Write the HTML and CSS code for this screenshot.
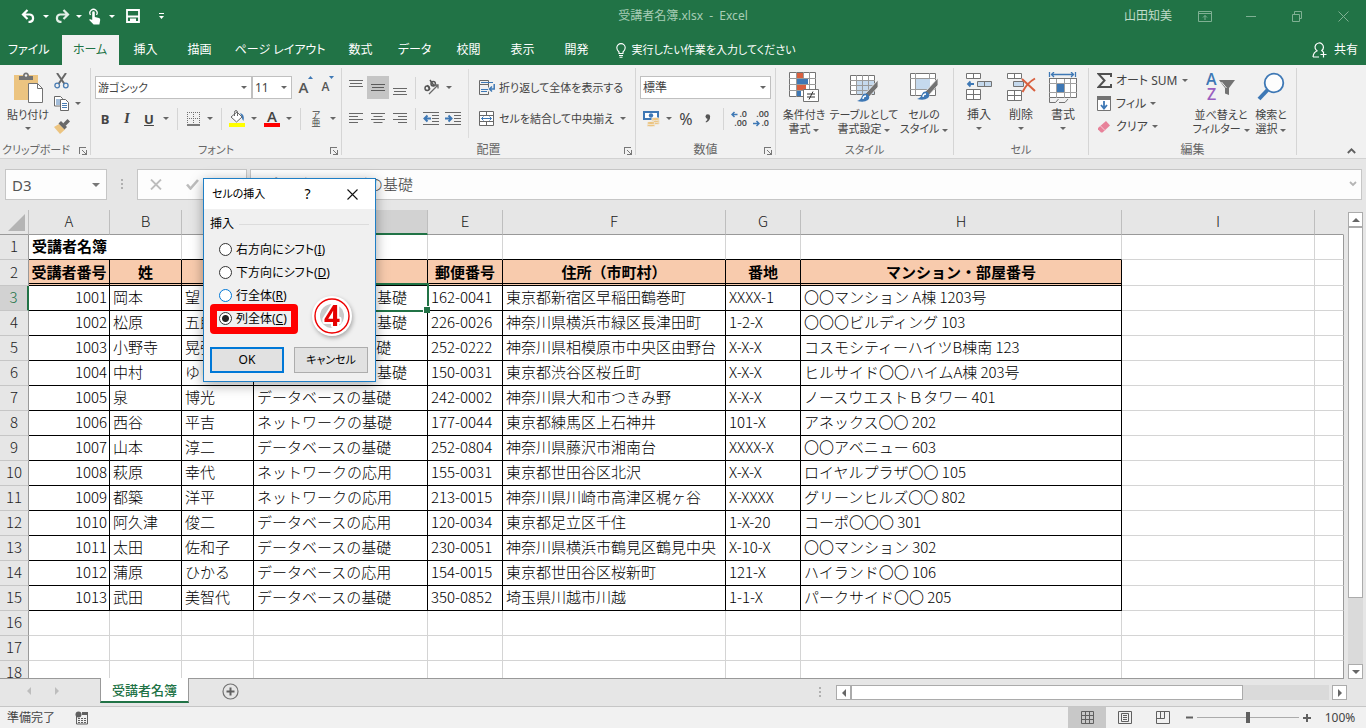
FILE: index.html
```html
<!DOCTYPE html>
<html lang="ja">
<head>
<meta charset="utf-8">
<title>受講者名簿.xlsx - Excel</title>
<link rel="stylesheet" href="styles.css">
</head>
<body>
<header class="titlebar">
  <div class="quick">
    <button class="qbtn" aria-label="元に戻す"><svg width="16" height="14" viewBox="0 0 16 14"><path d="M2.500 5.500H9a3.700 3.700 0 0 1 0 7.300H7.500M6.500 1 2 5.500 6.500 10" fill="none" stroke="#fff" stroke-width="2.200"/></svg></button>
    <button class="qdd" aria-label="元に戻すの一覧"><i class="tri"></i></button>
    <button class="qbtn redo" aria-label="やり直し"><svg width="16" height="14" viewBox="0 0 16 14"><path d="M13.500 5.500H6a3.700 3.700 0 0 0 0 7.300H7.500M9.500 1 14 5.500 9.500 10" fill="none" stroke="#e3efe8" stroke-width="2.200"/></svg></button>
    <button class="qdd" aria-label="やり直しの一覧"><i class="tri"></i></button>
    <button class="qbtn" aria-label="タッチ/マウス モードの切り替え"><svg width="14" height="17" viewBox="0 0 14 17"><path d="M2.500 7a3.600 3.600 0 1 1 6 0" fill="none" stroke="#fff" stroke-width="1.300"/><path d="M4.200 4.500a1.300 1.300 0 0 1 2.600 0V9l4.200 1q1.500.500 1.200 2l-.8 4.500H5.600L1 11.800q1-1.400 3.200.2z" fill="#fff"/></svg></button>
    <button class="qdd" aria-label="モードの一覧"><i class="tri"></i></button>
    <button class="qbtn save" aria-label="上書き保存"><svg width="14" height="14" viewBox="0 0 14 14"><path d="M1 1h12v12H1zM1 7.500h12" fill="none" stroke="#fff" stroke-width="1.800"/><path d="M4 9.500h6V14H8v-2H6.500v2H4z" fill="#fff"/></svg></button>
    <button class="qbtn" aria-label="クイック アクセス ツール バーのユーザー設定"><svg width="7" height="7" viewBox="0 0 7 7"><path d="M1 .5h5" stroke="#fff"/><path d="M1 3h5L3.500 6z" fill="#fff"/></svg></button>
  </div>
  <div class="doctitle">受講者名簿.xlsx&nbsp; - &nbsp;Excel</div>
  <div class="winctl">
    <span class="user">山田知美</span>
    <button aria-label="リボンの表示オプション"><svg width="14" height="11" viewBox="0 0 14 11"><path d="M.5.5h13v10H.5zM.5 2.500h13M7 9V4.500M5 6.500l2-2 2 2" fill="none" stroke="#7fb093"/></svg></button>
    <button aria-label="最小化"><svg width="10" height="11" viewBox="0 0 10 11"><path d="M0 5.500h10" stroke="#7fb093"/></svg></button>
    <button aria-label="元に戻す(縮小)"><svg width="10" height="11" viewBox="0 0 10 11"><path d="M.5 3.500h7v7h-7zM2.500 3V.5h7v7H8" fill="none" stroke="#7fb093"/></svg></button>
    <button aria-label="閉じる"><svg width="11" height="11" viewBox="0 0 11 11"><path d="M.5.5l10 10M10.500.5l-10 10" stroke="#7fb093"/></svg></button>
  </div>
</header>
<nav class="tabs">
  <button class="tab first">ファイル</button>
  <button class="tab active">ホーム</button>
  <button class="tab">挿入</button>
  <button class="tab">描画</button>
  <button class="tab">ページ レイアウト</button>
  <button class="tab">数式</button>
  <button class="tab">データ</button>
  <button class="tab">校閲</button>
  <button class="tab">表示</button>
  <button class="tab">開発</button>
  <button class="tellme"><svg width="10" height="15" viewBox="0 0 10 15"><path d="M3 10.500V9Q.8 7 .8 4.800a4.200 4.200 0 0 1 8.400 0Q9.200 7 7 9v1.500zM3 12.500h4M3.500 14.200h3" fill="none" stroke="#fff" stroke-width="1.100"/></svg>実行したい作業を入力してください</button>
  <button class="share"><svg width="16" height="16" viewBox="0 0 16 16"><path d="M1 15q.5-5 4.500-6.200M5.500 9A4.200 4.200 0 1 1 9.800 8.500L11 10M1 15h6M11.500 9.500v6M8.500 12.500h6" fill="none" stroke="#fff" stroke-width="1.200"/></svg>共有</button>
</nav>

<section class="ribbon">
  <div class="group g-clip">
    <div class="gbody">
      <button class="big paste">
        <svg width="29" height="31" viewBox="0 0 29 31"><path d="M0 3h24v25H0z" fill="#ecc480"/><path d="M5 8V4h4q0-3.500 3-3.500T15 4h4v4z" fill="#737373"/><circle cx="12" cy="3.500" r="1.200" fill="#f1f1f1"/><path d="M14.500 11.500h9l5 5v14h-14z" fill="#fff" stroke="#737373"/><path d="M23.500 11.500v5h5" fill="none" stroke="#737373"/></svg>
        <span>貼り付け</span><i class="tri"></i>
      </button>
      <div class="clipcol">
        <button aria-label="切り取り"><svg width="15" height="16" viewBox="0 0 15 16"><path d="M3 0l7.500 11M12 0 4.500 11" stroke="#686868" stroke-width="2" fill="none"/><circle cx="3.200" cy="12.500" r="2.300" fill="none" stroke="#4a7db3" stroke-width="1.300"/><circle cx="11.800" cy="12.500" r="2.300" fill="none" stroke="#4a7db3" stroke-width="1.300"/></svg></button>
        <button aria-label="コピー"><svg width="16" height="15" viewBox="0 0 16 15"><path d="M.5.5h6l2 2V10h-8z" fill="#fff" stroke="#686868"/><path d="M2 4h4M2 6h4M2 8h4" stroke="#4a7db3"/><path d="M6.500 3.500h5l3 3v8h-8z" fill="#fff" stroke="#686868"/><path d="M8 7.500h5M8 9.500h5M8 11.500h5" stroke="#4a7db3"/></svg><i class="tri"></i></button>
        <button aria-label="書式のコピー/貼り付け"><svg width="17" height="15" viewBox="0 0 17 15"><path d="M0 8l5-3 6 5.500L6 15z" fill="#ecc480"/><path d="M4.500 4.500 7 2l6 6-2.500 2.500z" fill="#686868"/><path d="M9 4.500 13.500 0 16 2.500 11.500 7z" fill="#686868"/></svg></button>
      </div>
    </div>
    <div class="glabel"><span>クリップボード</span><i class="launch"></i></div>
  </div>

  <div class="group g-font">
    <div class="gbody stack">
      <div class="row">
        <span class="combo w157"><select class="small" aria-label="フォント"><option>游ゴシック</option></select></span>
        <span class="combo w40"><select aria-label="フォント サイズ"><option>11</option></select></span>
        <button class="ib glyph grow" aria-label="フォント サイズの拡大">A<svg width="5" height="3" viewBox="0 0 5 3"><path d="M0 3h5L2.500 0z" fill="#3e78b5"/></svg></button>
        <button class="ib glyph shrink" aria-label="フォント サイズの縮小">A<svg width="5" height="3" viewBox="0 0 5 3"><path d="M0 0h5L2.500 3z" fill="#3e78b5"/></svg></button>
      </div>
      <div class="row gap">
        <button class="b20 bold">B</button>
        <button class="b20 ital">I</button>
        <span class="pair"><button class="b20 under">U</button><button class="dd" aria-label="下線の種類"><i class="tri"></i></button></span>
        <i class="sep"></i>
        <span class="pair"><button class="b20" aria-label="罫線"><svg width="13" height="14" viewBox="0 0 13 14"><path d="M.5 0v12M6.500 0v12M12.500 0v12M0 .5h13M0 6.500h13" stroke="#707070" stroke-dasharray="1 1" fill="none"/><path d="M0 13h13" stroke="#505050" stroke-width="1.500"/></svg></button><button class="dd" aria-label="罫線の種類"><i class="tri"></i></button></span>
        <i class="sep"></i>
        <span class="pair"><button class="b20" aria-label="塗りつぶしの色"><svg width="16" height="17" viewBox="0 0 16 17"><path d="M2 7l6-5 5 5-5.500 5z" fill="#fff" stroke="#686868"/><path d="M5.500 6V2.500q0-2 1.500-2t1.500 2V6" fill="none" stroke="#686868"/><path d="M11 3q5 1 3.500 8Q12.500 9 13 7z" fill="#3e78b5"/><path d="M0 13h16v4H0z" fill="#ff0"/></svg></button><button class="dd" aria-label="塗りつぶしの色の一覧"><i class="tri"></i></button></span>
        <span class="pair"><button class="b20 fcolor">A</button><button class="dd" aria-label="フォントの色の一覧"><i class="tri"></i></button></span>
        <i class="sep"></i>
        <span class="pair"><button class="b20 ruby"><span>ア</span><span>亜</span></button><button class="dd" aria-label="ふりがなの設定"><i class="tri"></i></button></span>
      </div>
    </div>
    <div class="glabel"><span>フォント</span><i class="launch"></i></div>
  </div>

  <div class="group g-align">
    <div class="gbody">
      <div class="alignL stack">
        <div class="row">
          <button class="ib" aria-label="上揃え"><svg width="14" height="15" viewBox="0 0 14 15"><path d="M0 .5h14M1 3.500h12M0 6.500h14" stroke="#686868"/></svg></button>
          <button class="ib on" aria-label="上下中央揃え"><svg width="14" height="15" viewBox="0 0 14 15"><path d="M0 4.500h14M1 7.500h12M0 10.500h14" stroke="#5a5a5a"/></svg></button>
          <button class="ib" aria-label="下揃え"><svg width="14" height="15" viewBox="0 0 14 15"><path d="M0 8.500h14M1 11.500h12M0 14.500h14" stroke="#686868"/></svg></button>
          <i class="sep"></i>
          <span class="pair"><button class="ib" aria-label="方向"><svg width="17" height="17" viewBox="0 0 17 17"><g fill="none" stroke="#555" stroke-width="1.500"><circle cx="4.200" cy="9.300" r="2.200"/><path d="M4.300 6.200 7 10.500M7 1l4.200 6"/><circle cx="10.200" cy="4.800" r="2.200"/></g><path d="M6 15 15 6M11.500 6H15v3.500" fill="none" stroke="#686868" stroke-width="1.300"/></svg></button><button class="dd" aria-label="方向の一覧"><i class="tri"></i></button></span>
        </div>
        <div class="row">
          <button class="ib" aria-label="左揃え"><svg width="14" height="11" viewBox="0 0 14 11"><path d="M0 .5h14M0 3.500h9M0 6.500h14M0 9.500h9" stroke="#686868"/></svg></button>
          <button class="ib" aria-label="中央揃え"><svg width="14" height="11" viewBox="0 0 14 11"><path d="M0 .5h14M2.500 3.500h9M0 6.500h14M2.500 9.500h9" stroke="#686868"/></svg></button>
          <button class="ib" aria-label="右揃え"><svg width="14" height="11" viewBox="0 0 14 11"><path d="M0 .5h14M5 3.500h9M0 6.500h14M5 9.500h9" stroke="#686868"/></svg></button>
          <i class="sep"></i>
          <button class="ib" aria-label="インデントを減らす"><svg width="16" height="14" viewBox="0 0 16 14"><path d="M0 .5h16M9 3.500h7M9 6.500h7M9 9.500h7M0 12.500h16" stroke="#686868"/><path d="M8 6.500H2M4.500 3.500l-3 3 3 3" fill="none" stroke="#3e78b5" stroke-width="2"/></svg></button>
          <button class="ib" aria-label="インデントを増やす"><svg width="16" height="14" viewBox="0 0 16 14"><path d="M0 .5h16M9 3.500h7M9 6.500h7M9 9.500h7M0 12.500h16" stroke="#686868"/><path d="M0 6.500h6M3.500 3.500l3 3-3 3" fill="none" stroke="#3e78b5" stroke-width="2"/></svg></button>
        </div>
      </div>
      <div class="alignR stack">
        <button class="row txt"><svg width="16" height="16" viewBox="0 0 16 16"><path d="M.5.5h9v4h-9zM.5 4.500h9v3M.5 4.500v10h9v-3" fill="none" stroke="#686868"/><path d="M2 2.500h12M2 9.500h7M2 11.500h6" stroke="#3e78b5" stroke-width="1.200"/><path d="M15.200 4v5H11M13 6.500 10.500 9 13 11.500" fill="none" stroke="#3e78b5" stroke-width="1.500"/></svg>折り返して全体を表示する</button>
        <button class="row txt"><svg width="16" height="16" viewBox="0 0 16 16"><path d="M.5.5h14v14H.5zM.5 4.500h14M.5 10.500h14M7.500.5v4M7.500 10.500v4" fill="#fff" stroke="#686868"/><path d="M2.500 7.500h10M4.500 5.500l-2 2 2 2M10.500 5.500l2 2-2 2" fill="none" stroke="#3e78b5"/></svg>セルを結合して中央揃え<i class="tri push"></i></button>
      </div>
    </div>
    <div class="glabel"><span>配置</span><i class="launch"></i></div>
  </div>

  <div class="group g-num">
    <div class="gbody stack">
      <div class="row"><span class="combo w131"><select aria-label="表示形式"><option>標準</option></select></span></div>
      <div class="row">
        <span class="pair"><button class="ib" aria-label="通貨表示形式"><svg width="17" height="16" viewBox="0 0 17 16"><path d="M0 0h16v9H0z" fill="#3e78b5"/><path d="M2 2h12v5H2z" fill="#fff"/><circle cx="8" cy="4.500" r="2.200" fill="#3e78b5"/><g fill="#ecc480" stroke="#f1f1f1" stroke-width=".7"><ellipse cx="12.500" cy="12" rx="4" ry="1.600"/><ellipse cx="12.500" cy="10" rx="4" ry="1.600"/><ellipse cx="12.500" cy="8" rx="4" ry="1.600"/><ellipse cx="8" cy="14.200" rx="4" ry="1.600"/><ellipse cx="8" cy="12" rx="4" ry="1.600"/></g></svg></button><button class="dd" aria-label="通貨の一覧"><i class="tri"></i></button></span>
        <button class="ib pct">%</button>
        <button class="ib" aria-label="桁区切りスタイル"><svg width="6" height="9" viewBox="0 0 6 9"><circle cx="2.800" cy="2.500" r="2.300" fill="#555"/><path d="M5 2.500q.5 4-4 6l-.4-.8Q3 6 2.500 3.500z" fill="#555"/></svg></button>
        <i class="sep near"></i>
        <button class="ib dec" aria-label="小数点以下の表示桁数を増やす"><span><svg width="7" height="7" viewBox="0 0 7 7"><path d="M6.500 3.500H1M3.500 1 1 3.500 3.500 6" fill="none" stroke="#3e78b5" stroke-width="1.500"/></svg>.0</span><span>.00</span></button>
        <button class="ib dec" aria-label="小数点以下の表示桁数を減らす"><span>.00</span><span><svg width="7" height="7" viewBox="0 0 7 7"><path d="M0 3.500h5.500M3.500 1 6 3.500 3.500 6" fill="none" stroke="#3e78b5" stroke-width="1.500"/></svg>.0</span></button>
      </div>
    </div>
    <div class="glabel"><span>数値</span><i class="launch"></i></div>
  </div>

  <div class="group g-style">
    <div class="gbody">
      <button class="big w56"><svg width="30" height="31" viewBox="0 0 30 31"><path d="M.5.5h26v24H.5z" fill="#fff" stroke="#737373"/><path d="M0 6.500h27M0 12.500h27M0 18.500h27M7.500 0v25M14.500 0v25M20.500 0v25" stroke="#9a9a9a"/><path d="M8 1h6v5H8zM8 13h9v5H8z" fill="#d9603f"/><path d="M8 7h11v5H8zM8 19h4v5H8z" fill="#3e78b5"/><path d="M14.500 17.500h15v12h-15z" fill="#fff" stroke="#737373"/><path d="M18 22h8M18 25h8M24 19.500 20 27.500" stroke="#333" fill="none"/></svg><span>条件付き</span><span>書式 <i class="tri"></i></span></button>
      <button class="big w64"><svg width="30" height="31" viewBox="0 0 30 31"><path d="M1.500 3.500h24v19h-24z" fill="#fff" stroke="#737373"/><path d="M8 9h17v13H8z" fill="#c5d9ed"/><path d="M1 8.500h25M1 13.500h25M1 18.500h25M7.500 3v20M13.500 3v20M19.500 3v20" stroke="#9a9a9a"/><path d="M29 8v7l-9 10-4-3z" fill="#737373" stroke="#f1f1f1" stroke-width=".8"/><path d="M8 29q4-1 5-5 2-4 6-1.500 2.500 3 0 5.500-4 3-11 1z" fill="#3e78b5"/><path d="M14 27q0-3 3-3" stroke="#fff" stroke-width="1.300" fill="none"/></svg><span>テーブルとして</span><span>書式設定 <i class="tri"></i></span></button>
      <button class="big w56"><svg width="30" height="31" viewBox="0 0 30 31"><path d="M1.500 1.500h25v22h-25z" fill="#fff" stroke="#737373"/><path d="M1 6.500h26M1 17.500h26M6.500 1v23M20.500 1v23" stroke="#9a9a9a"/><path d="M7 7h14v10H7z" fill="#c5d9ed"/><path d="M29 6v7l-9 10-4-3z" fill="#737373" stroke="#f1f1f1" stroke-width=".8"/><path d="M8 27q4-1 5-5 2-4 6-1.500 2.500 3 0 5.500-4 3-11 1z" fill="#3e78b5"/><path d="M14 25q0-3 3-3" stroke="#fff" stroke-width="1.300" fill="none"/></svg><span>セルの</span><span>スタイル <i class="tri"></i></span></button>
    </div>
    <div class="glabel"><span>スタイル</span></div>
  </div>

  <div class="group g-cell">
    <div class="gbody">
      <button class="big w42"><svg width="28" height="31" viewBox="0 0 28 31"><path d="M1.500 1.500h14v5h-14zM8.500 1.500v5M1.500 17.500h14v10h-14zM8.500 17.500v10M1.500 22.500h14" fill="#fff" stroke="#737373"/><path d="M12.500 9.500h14v5h-14zM19.500 9.500v5" fill="#c5d9ed" stroke="#737373"/><path d="M9 12H3M5.500 9.500 3 12l2.500 2.500" fill="none" stroke="#3e78b5" stroke-width="1.800"/></svg><span>挿入</span><i class="tri"></i></button>
      <button class="big w42"><svg width="30" height="31" viewBox="0 0 30 31"><path d="M1.500 1.500h14v5h-14zM8.500 1.500v5M1.500 18.500h14v10h-14zM8.500 18.500v10M1.500 23.500h14" fill="#fff" stroke="#737373"/><path d="M7.500 9.500h10v5h-10z" fill="#c5d9ed" stroke="#737373"/><path d="M16 7l13 12M29 6.500Q21 11 16.500 20" fill="none" stroke="#d9603f" stroke-width="2"/></svg><span>削除</span><i class="tri"></i></button>
      <button class="big w42"><svg width="30" height="31" viewBox="0 0 30 31"><path d="M1.500 0v5M27.500 0v5M3 2.500h23M6 0 3.500 2.500 6 5M23 0l2.500 2.500L23 5" fill="none" stroke="#3e78b5" stroke-width="1.300"/><path d="M1.500 6.500h27v19h-27z" fill="#fff" stroke="#737373"/><path d="M1 11.500h28M1 20.500h28M8.500 6v20M16.500 6v20M22.500 6v20" stroke="#a0a0a0"/><path d="M9 12h7v8H9z" fill="#3e78b5"/><path d="M1 6.500h28" stroke="#737373"/><path d="M1.500 26v4.500h6l3-3.500M11 30.500h6l3-3.500" fill="none" stroke="#737373"/></svg><span>書式</span><i class="tri"></i></button>
    </div>
    <div class="glabel"><span>セル</span></div>
  </div>

  <div class="group g-edit">
    <div class="gbody">
      <div class="editcol">
        <button><svg width="15" height="15" viewBox="0 0 15 15"><path d="M14 4V1H1.500l6 6.500-6 6.500H14v-3" fill="none" stroke="#505050" stroke-width="2"/></svg>オート SUM<i class="tri push"></i></button>
        <button><svg width="15" height="16" viewBox="0 0 15 16"><path d="M.5.5h13v14H.5z" fill="#fff" stroke="#737373"/><path d="M0 0h14v4H0z" fill="#737373"/><path d="M7 5v7M4 9l3 3.500L10 9" fill="none" stroke="#3e78b5" stroke-width="1.800"/></svg>フィル<i class="tri"></i></button>
        <button><svg width="15" height="14" viewBox="0 0 15 14"><path d="M9 1 13 5.500 5.500 12.500H4L1 9.500V8z" fill="#e8829a"/><path d="M3.500 6 8 10.500" stroke="#f6ccd6"/></svg>クリア<i class="tri"></i></button>
      </div>
      <button class="big w54"><svg width="30" height="31" viewBox="0 0 30 31"><text x="0" y="13" font-size="16" font-family="Open Sans" font-weight="600" fill="#3e78b5">A</text><text x="1" y="28" font-size="16" font-family="Open Sans" font-weight="600" fill="#9a5fc0">Z</text><path d="M13 8h16l-6 8v7l-4-1.500V16z" fill="#737373"/><path d="M15.500 10 20.500 16" stroke="#f1f1f1"/></svg><span>並べ替えと</span><span>フィルター <i class="tri"></i></span></button>
      <button class="big w46"><svg width="28" height="31" viewBox="0 0 28 31"><circle cx="17" cy="11" r="9.300" fill="#fdfdfd" stroke="#3e78b5" stroke-width="1.800"/><path d="M10.500 18 2 27" stroke="#3e78b5" stroke-width="4"/></svg><span>検索と</span><span>選択 <i class="tri"></i></span></button>
    </div>
    <div class="glabel"><span>編集</span></div>
  </div>
  <button class="collapse" aria-label="リボンを折りたたむ"><svg width="9" height="6" viewBox="0 0 9 6"><path d="M.8 5 4.500 1.300 8.200 5" fill="none" stroke="#606060" stroke-width="1.800"/></svg></button>
</section>

<section class="fbar">
  <div class="namebox"><input aria-label="名前ボックス" value="D3"><i class="tri"></i></div>
  <i class="dots"></i>
  <div class="fbtns">
    <button aria-label="キャンセル"><svg width="12" height="11" viewBox="0 0 12 11"><path d="M1 .5l10 10M11 .5 1 10.500" stroke="#bdbdbd" stroke-width="1.800"/></svg></button>
    <button aria-label="入力"><svg width="13" height="11" viewBox="0 0 13 11"><path d="M1 5.500 4.500 9.500 12 1" fill="none" stroke="#bdbdbd" stroke-width="2.600"/></svg></button>
    <button class="fx" aria-label="関数の挿入">fx</button>
  </div>
  <div class="finput"><input aria-label="数式バー" value="プログラミングの基礎"><svg width="8" height="6" viewBox="0 0 8 6"><path d="M1 1l3 3 3-3" fill="none" stroke="#b5b5b5" stroke-width="1.800"/></svg></div>
</section>

<main class="sheet">
  <div class="gridwrap">
  <table class="grid">
    <colgroup><col class="c0"><col class="cA"><col class="cB"><col class="cB"><col class="cD"><col class="cE"><col class="cF"><col class="cE"><col class="cH"><col class="cI"><col></colgroup>
    <thead><tr><th class="corner"><svg width="17" height="17" viewBox="0 0 17 17"><path d="M17 0v17H0z" fill="#b4b4b4"/></svg></th><th>A</th><th>B</th><th>C</th><th class="sel">D</th><th>E</th><th>F</th><th>G</th><th>H</th><th>I</th><th></th></tr></thead>
    <tbody>
    <tr class="r1"><th>1</th><td class="ttl" colspan="2">受講者名簿</td><td></td><td></td><td></td><td></td><td></td><td></td><td></td><td></td></tr>
    <tr class="hd"><th>2</th><td>受講者番号</td><td>姓</td><td>名</td><td>受講講座</td><td>郵便番号</td><td>住所（市町村）</td><td>番地</td><td>マンション・部屋番号</td><td></td><td></td></tr>
    <tr class="d"><th class="sel">3</th><td>1001</td><td>岡本</td><td>望</td><td class="cur">プログラミングの基礎<i class="cursor"></i></td><td>162-0041</td><td>東京都新宿区早稲田鶴巻町</td><td>XXXX-1</td><td>〇〇マンション A棟 1203号</td><td></td><td></td></tr>
    <tr class="d"><th>4</th><td>1002</td><td>松原</td><td>五郎</td><td>プログラミングの基礎</td><td>226-0026</td><td>神奈川県横浜市緑区長津田町</td><td>1-2-X</td><td>〇〇〇ビルディング 103</td><td></td><td></td></tr>
    <tr class="d"><th>5</th><td>1003</td><td>小野寺</td><td>晃弘</td><td>データベースの基礎</td><td>252-0222</td><td>神奈川県相模原市中央区由野台</td><td>X-X-X</td><td>コスモシティーハイツB棟南 123</td><td></td><td></td></tr>
    <tr class="d"><th>6</th><td>1004</td><td>中村</td><td>ゆり</td><td>プログラミングの基礎</td><td>150-0031</td><td>東京都渋谷区桜丘町</td><td>X-X-X</td><td>ヒルサイド〇〇ハイムA棟 203号</td><td></td><td></td></tr>
    <tr class="d"><th>7</th><td>1005</td><td>泉</td><td>博光</td><td>データベースの基礎</td><td>242-0002</td><td>神奈川県大和市つきみ野</td><td>X-X-X</td><td>ノースウエストＢタワー 401</td><td></td><td></td></tr>
    <tr class="d"><th>8</th><td>1006</td><td>西谷</td><td>平吉</td><td>ネットワークの基礎</td><td>177-0044</td><td>東京都練馬区上石神井</td><td>101-X</td><td>アネックス〇〇 202</td><td></td><td></td></tr>
    <tr class="d"><th>9</th><td>1007</td><td>山本</td><td>淳二</td><td>データベースの基礎</td><td>252-0804</td><td>神奈川県藤沢市湘南台</td><td>XXXX-X</td><td>〇〇アベニュー 603</td><td></td><td></td></tr>
    <tr class="d"><th>10</th><td>1008</td><td>萩原</td><td>幸代</td><td>ネットワークの応用</td><td>155-0031</td><td>東京都世田谷区北沢</td><td>X-X-X</td><td>ロイヤルプラザ〇〇 105</td><td></td><td></td></tr>
    <tr class="d"><th>11</th><td>1009</td><td>都築</td><td>洋平</td><td>ネットワークの応用</td><td>213-0015</td><td>神奈川県川崎市高津区梶ヶ谷</td><td>X-XXXX</td><td>グリーンヒルズ〇〇 802</td><td></td><td></td></tr>
    <tr class="d"><th>12</th><td>1010</td><td>阿久津</td><td>俊二</td><td>データベースの応用</td><td>120-0034</td><td>東京都足立区千住</td><td>1-X-20</td><td>コーポ〇〇〇 301</td><td></td><td></td></tr>
    <tr class="d"><th>13</th><td>1011</td><td>太田</td><td>佐和子</td><td>データベースの基礎</td><td>230-0051</td><td>神奈川県横浜市鶴見区鶴見中央</td><td>X-10-X</td><td>〇〇マンション 302</td><td></td><td></td></tr>
    <tr class="d"><th>14</th><td>1012</td><td>蒲原</td><td>ひかる</td><td>データベースの応用</td><td>154-0015</td><td>東京都世田谷区桜新町</td><td>121-X</td><td>ハイランド〇〇 106</td><td></td><td></td></tr>
    <tr class="d"><th>15</th><td>1013</td><td>武田</td><td>美智代</td><td>データベースの基礎</td><td>350-0852</td><td>埼玉県川越市川越</td><td>1-1-X</td><td>パークサイド〇〇 205</td><td></td><td></td></tr>
    <tr><th>16</th><td></td><td></td><td></td><td></td><td></td><td></td><td></td><td></td><td></td><td></td></tr>
    <tr><th>17</th><td></td><td></td><td></td><td></td><td></td><td></td><td></td><td></td><td></td><td></td></tr>
    <tr><th>18</th><td></td><td></td><td></td><td></td><td></td><td></td><td></td><td></td><td></td><td></td></tr>
    </tbody>
  </table>
  </div>
  <div class="vscroll">
    <button class="sbtn" aria-label="上へスクロール"><i class="arr u"></i></button>
    <div class="vtrack"><div class="vthumb"></div></div>
    <button class="sbtn" aria-label="下へスクロール"><i class="arr n"></i></button>
  </div>
</main>

<footer class="sheetbar">
  <div class="navs"><button aria-label="前のシート"><i class="nav l"></i></button><button aria-label="次のシート"><i class="nav r"></i></button></div>
  <button class="stab">受講者名簿</button>
  <button class="plus" aria-label="新しいシート"><svg width="17" height="17" viewBox="0 0 17 17"><circle cx="8.500" cy="8.500" r="7.500" fill="none" stroke="#737373" stroke-width="1.200"/><path d="M8.500 4.500v8M4.500 8.500h8" stroke="#606060" stroke-width="2"/></svg></button>
  <i class="dots h"></i>
  <div class="hscroll">
    <button class="sbtn" aria-label="左へスクロール"><i class="arr l"></i></button>
    <div class="htrack"><div class="hthumb"></div></div>
    <button class="sbtn" aria-label="右へスクロール"><i class="arr r"></i></button>
  </div>
</footer>
<div class="status">
  <span class="ready">準備完了</span>
  <svg width="14" height="14" viewBox="0 0 14 14"><path d="M1.500 5v8h11V1.500H7" fill="none" stroke="#606060"/><path d="M7 1h6v3H7z" fill="#606060"/><circle cx="3.500" cy="3.500" r="3" fill="#606060"/><path d="M3 7.500h9M3 9.500h9M3 11.500h9" stroke="#606060" stroke-dasharray="2 1"/></svg>
  <div class="views">
    <button class="on" aria-label="標準"><svg width="13" height="13" viewBox="0 0 13 13"><path d="M.5.5h12v12H.5zM4.500.5v12M8.500.5v12M.5 4.500h12M.5 8.500h12" fill="none" stroke="#606060"/></svg></button>
    <button aria-label="ページ レイアウト"><svg width="14" height="13" viewBox="0 0 14 13"><path d="M.5.5h13v12H.5zM3.500 2.500h7v8h-7zM5 4.500h4M5 6.500h4M5 8.500h4" fill="none" stroke="#606060"/></svg></button>
    <button aria-label="改ページ プレビュー"><svg width="14" height="13" viewBox="0 0 14 13"><path d="M.5.5h13v12H.5zM.5 7.500h8v-7M4.500.5v7" fill="none" stroke="#606060"/></svg></button>
  </div>
  <button class="zb" aria-label="縮小"><svg width="7" height="7" viewBox="0 0 7 7"><path d="M0 3.500h7" stroke="#606060" stroke-width="2"/></svg></button>
  <input class="zoom" type="range" min="0" max="100" value="50" aria-label="ズーム">
  <button class="zb" aria-label="拡大"><svg width="8" height="8" viewBox="0 0 8 8"><path d="M0 4h8M4 0v8" stroke="#606060" stroke-width="2"/></svg></button>
  <span class="pctv">100%</span>
</div>

<div class="dialog" role="dialog" aria-label="セルの挿入">
  <div class="dtitle"><span>セルの挿入</span><button class="help">?</button><button aria-label="閉じる"><svg width="11" height="11" viewBox="0 0 11 11"><path d="M.5.5l10 10M10.500.5l-10 10" stroke="#111" stroke-width="1.100"/></svg></button></div>
  <form class="dbody">
    <fieldset>
      <legend>挿入</legend>
      <label><input type="radio" name="m"><span>右方向にシフト(<u>I</u>)</span></label>
      <label><input type="radio" name="m"><span>下方向にシフト(<u>D</u>)</span></label>
      <label><input type="radio" name="m" class="hot"><span>行全体(<u>R</u>)</span></label>
      <label class="chosen"><input type="radio" name="m" checked><span>列全体(<u>C</u>)</span></label>
    </fieldset>
    <div class="dbtns"><button type="button" class="ok">OK</button><button type="button" class="cancel">キャンセル</button></div>
  </form>
  <div class="frame"></div>
  <div class="badge"><svg width="42" height="42" viewBox="0 0 42 42"><circle cx="21" cy="21" r="20" fill="#fff"/><circle cx="21" cy="21" r="17" fill="#fff" stroke="#e00" stroke-width="1.400"/><circle cx="21" cy="21" r="12" fill="#c9c9c9"/><text x="21" y="31" text-anchor="middle" font-family="Noto Sans" font-weight="bold" font-size="28" fill="#e60000" stroke="#fff" stroke-width="4" paint-order="stroke" stroke-linejoin="round">4</text></svg></div>
</div>
</body>
</html>
```
FILE: styles.css
```css
* { box-sizing: border-box; }
html, body { height: 100%; margin: 0; }
body {
  display: flex;
  flex-direction: column;
  position: relative;
  overflow: hidden;
  background: #e6e6e6;
  color: #444;
  font: 12px/16px "Noto Sans", "Noto Sans CJK JP", sans-serif;
  font-feature-settings: "palt";
}
button, input, select {
  font: inherit;
  font-feature-settings: inherit;
  color: inherit;
  background: none;
  border: 0;
  padding: 0;
  margin: 0;
}
button { white-space: nowrap; }
svg { display: block; flex: none; }
i { font-style: normal; }
.tri {
  display: inline-block;
  flex: none;
  border: 3px solid transparent;
  border-top-color: #666;
  border-bottom: 0;
}

/* title bar */
.titlebar {
  flex: none;
  height: 35px;
  background: #217346;
  color: #a6cdb5;
  display: grid;
  grid-template-columns: 1fr auto 1fr;
  align-items: center;
  padding-bottom: 3px;
}
.quick { display: flex; align-items: center; padding-left: 18px; }
.qbtn { width: 22px; height: 22px; display: grid; place-items: center; }
.qdd { width: 11px; height: 22px; display: grid; place-items: center; }
.qbtn.save { margin: 0 6px 0 5px; }
.titlebar .tri { border-width: 3px 3px 0; border-top-color: #fff; }
.winctl { display: flex; justify-content: flex-end; align-items: center; }
.winctl button { width: 46px; height: 30px; display: grid; place-items: center; }
.user { margin-right: 10px; color: #c0dcca; }

/* ribbon tabs */
.tabs { flex: none; height: 30px; background: #217346; color: #fff; display: flex; align-items: stretch; }
.tab { min-width: 54px; padding: 0 8px; }
.tab.first { margin-right: 4px; min-width: 57px; }
.tab.active { background: #f1f1f1; color: #217346; min-width: 57px; }
.tellme, .share { display: flex; align-items: center; gap: 6px; }
.tellme { margin-left: 12px; font-size: 11px; }
.share { margin-left: auto; padding-right: 8px; }

/* ribbon */
.ribbon { flex: none; display: flex; background: #f1f1f1; border-bottom: 1px solid #d2d2d2; height: 94px; }
.group { flex: none; position: relative; display: flex; flex-direction: column; padding: 4px 0 0; border-right: 1px solid #d5d5d5; border-image: linear-gradient(transparent 4px, #d5d5d5 4px, #d5d5d5 89px, transparent 89px) 1; }
.g-clip { width: 91px; }
.g-font { width: 251px; }
.g-align { width: 294px; }
.g-num { width: 140px; }
.g-style { width: 178px; }
.g-cell { width: 135px; }
.g-edit { width: 208px; }
.gbody { flex: 1; display: flex; }
.glabel { height: 17px; display: flex; align-items: center; position: relative; color: #666; font-size: 11px; white-space: nowrap; }
.glabel span { flex: 1; text-align: center; }
.g-clip .glabel span { margin-right: 18px; }
.g-align .glabel, .g-num .glabel, .g-edit .glabel { font-size: 12px; }
.launch { position: absolute; right: 4px; top: 6px; width: 7px; height: 7px; border: 1px solid #777; border-right: 0; border-bottom: 0; }
.launch::after { content: ""; position: absolute; right: -1px; bottom: -1px; width: 4px; height: 4px; border: 1px solid #777; border-top: 0; border-left: 0; background: linear-gradient(45deg, transparent 40%, #777 40%, #777 60%, transparent 60%); }
.stack { display: flex; flex-direction: column; padding-top: 7px; gap: 8px; }
.row { display: flex; align-items: center; height: 23px; }
.row.gap { gap: 2px; }
.pair { display: flex; }
.ib, .b20, .dd { height: 23px; display: grid; place-items: center; flex: none; }
.ib { width: 22px; }
.ib.on { background: #c5c5c5; }
.b20 { width: 20px; }
.dd { width: 13px; }
.sep { width: 1px; height: 22px; background: #d5d5d5; margin: 0 3px; flex: none; }
.combo { position: relative; height: 23px; border: 1px solid #c0c0c0; background: #fff; }
.combo::after { content: ""; position: absolute; right: 4px; top: 9px; border: 3px solid transparent; border-top-color: #666; border-bottom: 0; }
.combo select { appearance: none; width: 100%; height: 21px; padding-left: 2px; }
.combo .small { font-size: 11px; }
.w157 { width: 157px; }
.w40 { width: 40px; }
.w131 { width: 131px; }

.paste { margin-left: 6px; width: 44px; font-size: 11px; }
.clipcol { display: flex; flex-direction: column; }
.clipcol button { height: 23px; display: flex; align-items: center; gap: 5px; padding-left: 4px; }
.big { display: flex; flex-direction: column; align-items: center; padding-top: 3px; line-height: 14px; }
.big svg { height: 31px; margin-bottom: 5px; }
.big span .tri { vertical-align: middle; }
.big > .tri { margin-top: 5px; }
.w42 { width: 42px; }
.w46 { width: 46px; }
.w54 { width: 54px; }
.w56 { width: 56px; }
.w64 { width: 64px; }
.w46, .w54, .w56, .w64 { font-size: 11px; }
.g-cell .gbody { padding-left: 4px; }

.g-font .gbody, .g-num .gbody { padding-left: 4px; }
.glyph { font: 600 15px/22px "Open Sans", sans-serif; color: #555; display: flex; align-items: flex-start; justify-content: center; }
.shrink { font-size: 12px; }
.grow { margin-left: 3px; }
.bold { font-weight: 700; font-size: 13px; }
.ital { font: italic 700 15px "Liberation Serif", serif; }
.under { font-weight: 700; text-decoration: underline; font-size: 13px; }
.fcolor { font: 600 15px/13px "Open Sans", sans-serif; align-content: center; }
.fcolor::after { content: ""; width: 16px; height: 4px; background: #f00; }
.ruby { align-content: center; line-height: 8px; font-size: 9px; }
.g-align .gbody { padding-left: 3px; }
.alignL { width: 123px; }
.alignL .sep { margin: 0 4px; }
.alignR { border-left: 1px solid #dcdcdc; padding-left: 10px; flex: 1; margin-bottom: 3px; font-size: 11px; }
.txt { gap: 4px; }
.push { margin-left: auto; margin-right: 9px; }
.pct { font-size: 16px; }
.dec { font: 600 9px/8px "Open Sans", sans-serif; align-content: center; justify-items: end; padding-right: 2px; }
.dec span { display: flex; align-items: center; height: 9px; gap: 1px; }
.sep.near { margin-left: 4px; }

.editcol { width: 105px; padding-left: 8px; display: flex; flex-direction: column; }
.editcol button { height: 23px; display: flex; align-items: center; gap: 4px; }
.editcol .push { margin-right: 6px; }
.collapse { margin: auto 10px 4px auto; }

/* formula bar */
.fbar { flex: none; height: 51px; display: flex; align-items: flex-start; padding: 10px 4px 0 5px; }
.namebox, .fbtns, .finput { height: 31px; border: 1px solid #c6c6c6; background: #fdfdfd; display: flex; align-items: center; }
.namebox { width: 102px; padding: 0 6px; }
.namebox input { flex: 1; min-width: 0; font-size: 15px; color: #555; }
.namebox .tri { border-width: 4px 4px 0; border-top-color: #777; }
.dots { width: 2px; height: 10px; margin: 10px 14px; background: repeating-linear-gradient(#b0b0b0 0 2px, transparent 2px 4px); }
.fbtns { width: 110px; justify-content: space-around; }
.fx { font: italic 15px "Liberation Serif", serif; color: #bbb; }
.finput { flex: 1; margin-left: 3px; padding: 0 4px 2px 12px; }
.finput input { flex: 1; min-width: 0; font: 15px "Noto Sans CJK JP", sans-serif; font-feature-settings: normal; font-weight: 300; }

/* sheet */
.sheet { flex: 1; min-height: 0; display: flex; }
.gridwrap { flex: 1; min-width: 0; overflow: hidden; border-bottom: 1px solid #999; }
.grid { table-layout: fixed; width: 100%; min-width: 1316px; border-collapse: separate; border-spacing: 0; font: 300 15px/20px "Noto Sans CJK JP", sans-serif; font-feature-settings: normal; color: #000; }
.c0 { width: 29px; }
.cA { width: 81px; }
.cB { width: 72px; }
.cD { width: 174px; }
.cE { width: 75px; }
.cF { width: 223px; }
.cH { width: 321px; }
.cI { width: 193px; }
.grid th, .grid td { height: 25px; padding: 0 2px 2px; border-right: 1px solid #d4d4d4; border-bottom: 1px solid #d4d4d4; white-space: nowrap; text-align: left; }
.grid td { background: #fff; }
.grid td:nth-child(n+3) { padding-left: 3px; }
.grid th { background: #e6e6e6; color: #222; font-weight: 300; text-align: center; padding: 0 0 2px; }
.grid thead th { border-bottom-color: #999; border-right-color: #bebebe; }
.grid thead th:last-child { border-right-color: #e6e6e6; }
.grid tbody td:last-child { border-right-color: #999; }
.grid tbody th { border-right-color: #999; border-bottom-color: #c6c6c6; }
.grid .corner svg { margin: 3px 0 0 8px; }
.grid thead th.sel { background: #d2d2d2; border-bottom: 2px solid #217346; color: #217346; }
.grid tbody th.sel { background: #d2d2d2; border-right: 2px solid #217346; color: #217346; }
.grid .ttl { font-weight: 700; padding-left: 3px; }
.r1 td:nth-child(n+2):nth-child(-n+8) { border-bottom-color: #000; }
.hd td:nth-child(n+2):nth-child(-n+9) { background: #f8cbad; font-weight: 700; text-align: center; border-right-color: #000; border-bottom: 3px double #000; }
.grid .hd td, .grid .hd th { height: 26px; }
.grid .hd td { padding: 0; }
.d td:nth-child(n+2):nth-child(-n+9) { border-right-color: #000; border-bottom-color: #000; }
.grid .d td:nth-child(2) { text-align: right; }
.grid td.cur { position: relative; overflow: visible; }
.cursor { position: absolute; left: -2px; top: -3px; right: -2px; bottom: -2px; border: 2px solid #217346; }
.cursor::after { content: ""; position: absolute; right: -3px; bottom: -3px; width: 6px; height: 6px; background: #217346; border: 1px solid #fff; border-right: 0; border-bottom: 0; }

.sbtn { flex: none; width: 15px; height: 15px; border: 1px solid #ababab; background: #fff; display: grid; place-items: center; }
.arr { border: 4px solid transparent; }
.arr.u { border-bottom-color: #666; border-top: 0; }
.arr.n { border-top-color: #666; border-bottom: 0; }
.arr.l { border-right-color: #666; border-left: 0; }
.arr.r { border-left-color: #666; border-right: 0; }
.vscroll { width: 22px; padding: 2px 3px 0 4px; display: flex; flex-direction: column; }
.vtrack { flex: 1; background: #dadada; }
.vthumb { height: 85%; background: #fff; border: 1px solid #ababab; }

/* sheet tabs */
.sheetbar { flex: none; height: 27px; display: flex; align-items: flex-start; padding-right: 19px; }
.navs { width: 100px; padding: 8px 0 0 27px; display: flex; gap: 24px; }
.nav { display: block; border: 4px solid transparent; }
.nav.l { border-right-color: #bdbdbd; border-left: 0; }
.nav.r { border-left-color: #bdbdbd; border-right: 0; }
.stab { height: 25px; margin-top: -1px; position: relative; padding: 0 11px; background: #fff; border: 1px solid #999; border-top: 0; border-bottom: 2px solid #217346; color: #217346; font: 13px/20px "Noto Sans CJK JP", sans-serif; font-weight: 500; font-feature-settings: normal; }
.plus { margin: 4px 0 0 33px; }
.dots.h { margin: 8px 15px 0 auto; }
.hscroll { width: 511px; margin-top: 6px; display: flex; }
.htrack { flex: 1; background: #dadada; margin-right: 3px; }
.hthumb { width: 82%; height: 15px; background: #fff; border: 1px solid #ababab; }

/* status bar */
.status { flex: none; height: 22px; background: #f1f1f1; border-top: 1px solid #c6c6c6; display: flex; align-items: center; padding-left: 7px; }
.ready { margin-right: 20px; }
.views { display: flex; margin-left: auto; height: 21px; }
.views button { width: 38px; display: grid; place-items: center; }
.views .on { background: #c8c8c8; }
.zb { width: 15px; display: grid; place-items: center; }
.zoom { appearance: none; width: 102px; height: 12px; background: linear-gradient(#ababab, #ababab) center / 100% 1px no-repeat; }
.zoom::-webkit-slider-thumb { appearance: none; width: 4px; height: 11px; background: #606060; }
.pctv { width: 52px; text-align: center; }

/* dialog */
.dialog { position: absolute; left: 203px; top: 178px; width: 173px; background: #f0f0f0; border: 1px solid #1f7fc6; box-shadow: 0 3px 12px rgba(0, 0, 0, .35); color: #000; }
.dtitle { height: 30px; background: #fff; display: flex; align-items: center; padding-left: 8px; }
.dtitle span { flex: 1; font-size: 11px; }
.dtitle button { width: 45px; height: 30px; display: grid; place-items: center; }
.dtitle .help { font-size: 14px; }
.dbody { padding: 7px 6px 8px; }
fieldset { border: 0; margin: 0; padding: 0; min-width: 0; }
legend { display: flex; align-items: center; width: 100%; padding: 0; margin-bottom: 6px; gap: 5px; }
legend::after { content: ""; flex: 1; height: 1px; background: #dcdcdc; }
fieldset label { display: flex; align-items: center; height: 23px; padding-left: 9px; }
fieldset input { appearance: none; width: 13px; height: 13px; border: 1px solid #333; border-radius: 50%; background: #fff; margin-right: 4px; }
fieldset input.hot { border-color: #0078d7; }
fieldset input:checked { background: radial-gradient(circle, #222 0 3px, #fff 4px); }
.dbtns { display: flex; gap: 10px; margin-top: 17px; }
.dbtns button { width: 74px; height: 26px; background: #e1e1e1; border: 1px solid #adadad; }
.dbtns .ok { border: 2px solid #0078d7; }
.dbtns .cancel { font-size: 11px; }
.frame { position: absolute; left: 6px; top: 125px; width: 88px; height: 30px; border: 7px solid #f00; border-radius: 4px; }
.badge { position: absolute; left: 107px; top: 116px; border-radius: 50%; filter: drop-shadow(1px 2px 2px rgba(0, 0, 0, .3)); }
```
